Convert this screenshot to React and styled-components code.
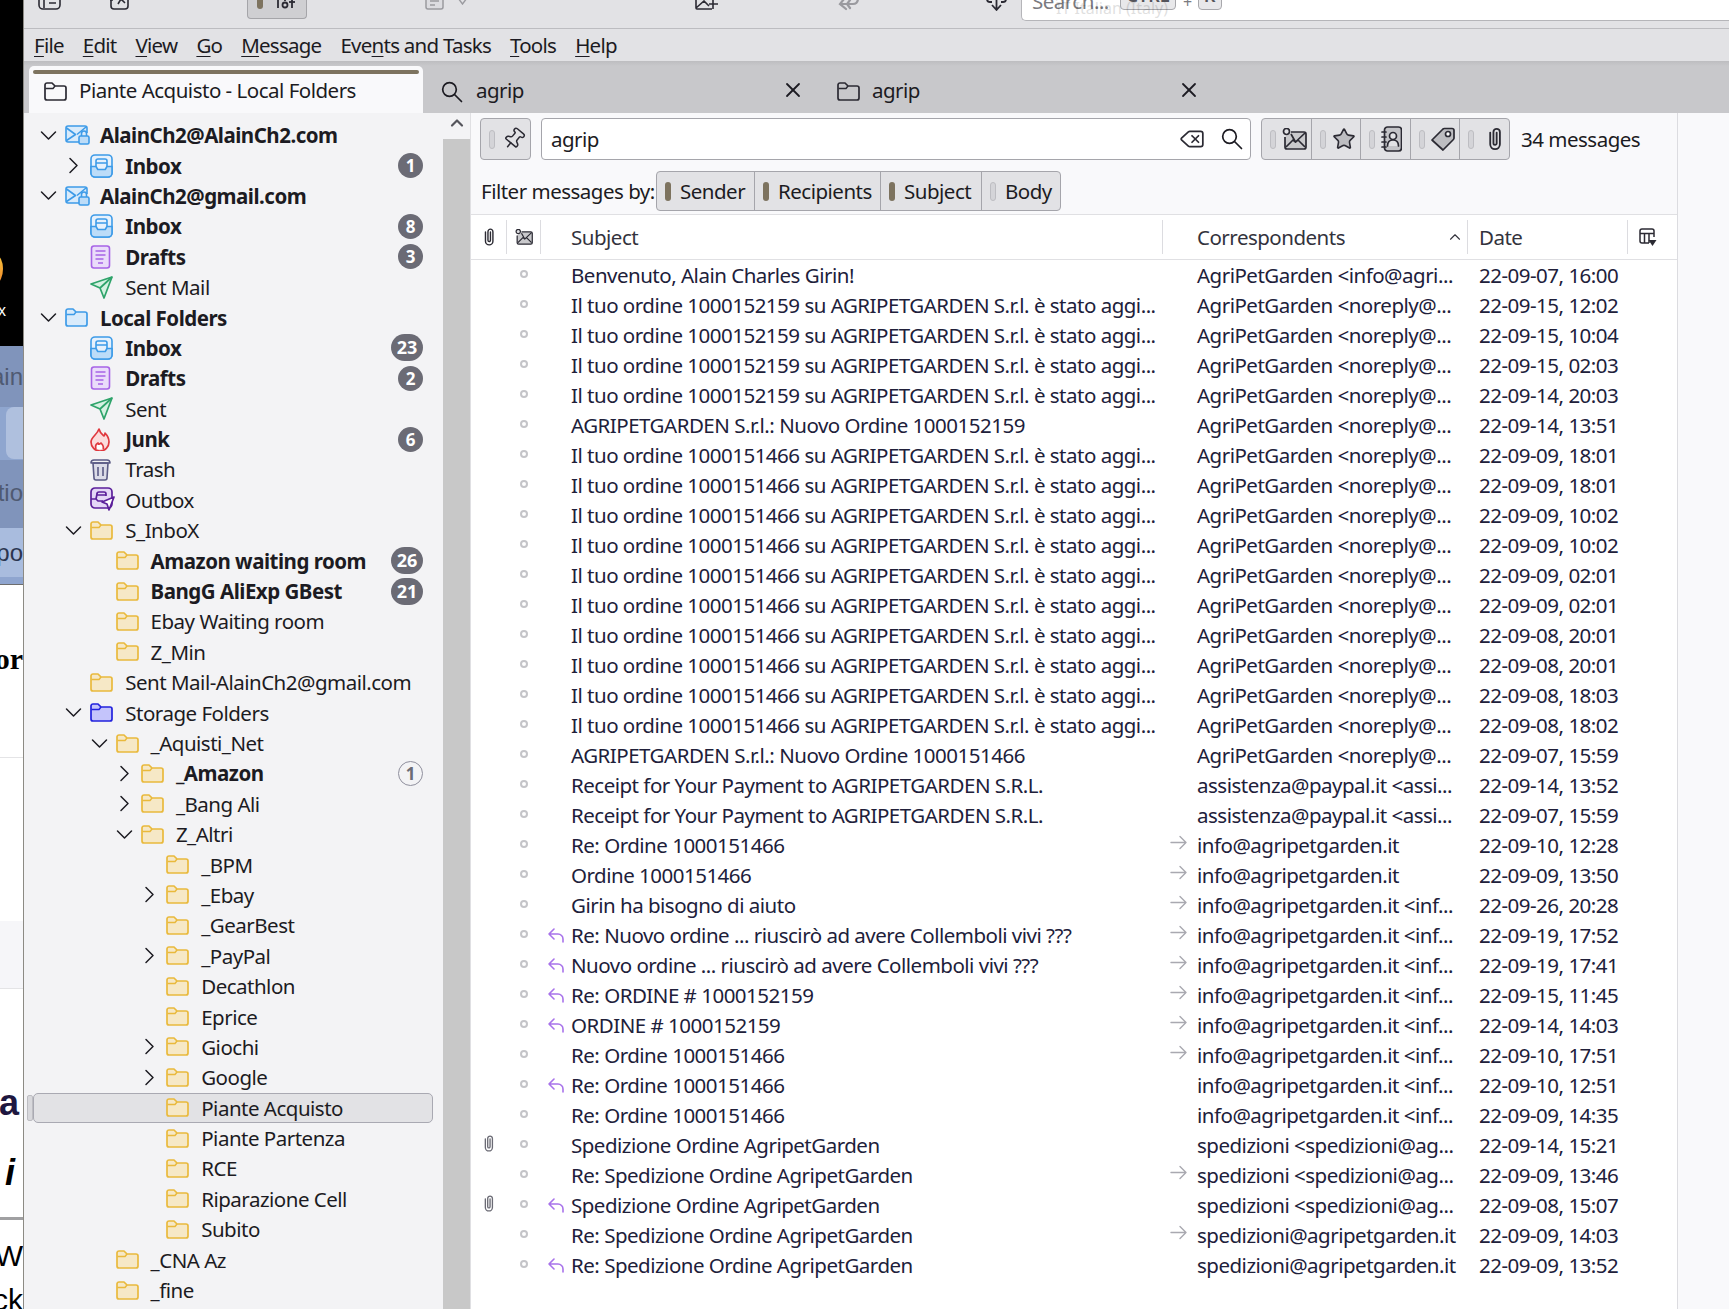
import React from "react";
import styled, { createGlobalStyle } from "styled-components";
import { X, Pin, Star, Delete, ChevronUp } from "lucide-react";

const Global = createGlobalStyle`
  html, body { margin: 0; padding: 0; background: #fff; overflow: hidden; }
  body { font-family: "Noto Sans", "Open Sans", sans-serif; }
`;

const tuo = (n) => `Il tuo ordine ${n} su AGRIPETGARDEN S.r.l. è stato aggi...`;
const apg = "AgriPetGarden <noreply@...";
const pay = "assistenza@paypal.it <assi...";
const inf = "info@agripetgarden.it <inf...";
const spe = "spedizioni <spedizioni@ag...";
const A = "1000152159";
const B = "1000151466";

const messages = [
  { s: "Benvenuto, Alain Charles Girin!", c: "AgriPetGarden <info@agri...", d: "22-09-07, 16:00" },
  { s: tuo(A), c: apg, d: "22-09-15, 12:02" },
  { s: tuo(A), c: apg, d: "22-09-15, 10:04" },
  { s: tuo(A), c: apg, d: "22-09-15, 02:03" },
  { s: tuo(A), c: apg, d: "22-09-14, 20:03" },
  { s: `AGRIPETGARDEN S.r.l.: Nuovo Ordine ${A}`, c: apg, d: "22-09-14, 13:51" },
  { s: tuo(B), c: apg, d: "22-09-09, 18:01" },
  { s: tuo(B), c: apg, d: "22-09-09, 18:01" },
  { s: tuo(B), c: apg, d: "22-09-09, 10:02" },
  { s: tuo(B), c: apg, d: "22-09-09, 10:02" },
  { s: tuo(B), c: apg, d: "22-09-09, 02:01" },
  { s: tuo(B), c: apg, d: "22-09-09, 02:01" },
  { s: tuo(B), c: apg, d: "22-09-08, 20:01" },
  { s: tuo(B), c: apg, d: "22-09-08, 20:01" },
  { s: tuo(B), c: apg, d: "22-09-08, 18:03" },
  { s: tuo(B), c: apg, d: "22-09-08, 18:02" },
  { s: `AGRIPETGARDEN S.r.l.: Nuovo Ordine ${B}`, c: apg, d: "22-09-07, 15:59" },
  { s: "Receipt for Your Payment to AGRIPETGARDEN S.R.L.", c: pay, d: "22-09-14, 13:52" },
  { s: "Receipt for Your Payment to AGRIPETGARDEN S.R.L.", c: pay, d: "22-09-07, 15:59" },
  { s: `Re: Ordine ${B}`, c: "info@agripetgarden.it", d: "22-09-10, 12:28", out: 1 },
  { s: `Ordine ${B}`, c: "info@agripetgarden.it", d: "22-09-09, 13:50", out: 1 },
  { s: "Girin ha bisogno di aiuto", c: inf, d: "22-09-26, 20:28", out: 1 },
  { s: "Re: Nuovo ordine ... riuscirò ad avere Collemboli vivi ???", c: inf, d: "22-09-19, 17:52", out: 1, re: 1 },
  { s: "Nuovo ordine ... riuscirò ad avere Collemboli vivi ???", c: inf, d: "22-09-19, 17:41", out: 1, re: 1 },
  { s: `Re: ORDINE # ${A}`, c: inf, d: "22-09-15, 11:45", out: 1, re: 1 },
  { s: `ORDINE # ${A}`, c: inf, d: "22-09-14, 14:03", out: 1, re: 1 },
  { s: `Re: Ordine ${B}`, c: inf, d: "22-09-10, 17:51", out: 1 },
  { s: `Re: Ordine ${B}`, c: inf, d: "22-09-10, 12:51", re: 1 },
  { s: `Re: Ordine ${B}`, c: inf, d: "22-09-09, 14:35" },
  { s: "Spedizione Ordine AgripetGarden", c: spe, d: "22-09-14, 15:21", clip: 1 },
  { s: "Re: Spedizione Ordine AgripetGarden", c: spe, d: "22-09-09, 13:46", out: 1 },
  { s: "Spedizione Ordine AgripetGarden", c: spe, d: "22-09-08, 15:07", clip: 1, re: 1 },
  { s: "Re: Spedizione Ordine AgripetGarden", c: "spedizioni@agripetgarden.it", d: "22-09-09, 14:03", out: 1 },
  { s: "Re: Spedizione Ordine AgripetGarden", c: "spedizioni@agripetgarden.it", d: "22-09-09, 13:52", re: 1 },
];

const folders = [
  { l: 0, t: "AlainCh2@AlainCh2.com", i: "account", o: 1, b: 1 },
  { l: 1, t: "Inbox", i: "inbox", o: 0, b: 1, n: 1 },
  { l: 0, t: "AlainCh2@gmail.com", i: "account", o: 1, b: 1 },
  { l: 1, t: "Inbox", i: "inbox", b: 1, n: 8 },
  { l: 1, t: "Drafts", i: "drafts", b: 1, n: 3 },
  { l: 1, t: "Sent Mail", i: "sent" },
  { l: 0, t: "Local Folders", i: "local", o: 1, b: 1 },
  { l: 1, t: "Inbox", i: "inbox", b: 1, n: 23 },
  { l: 1, t: "Drafts", i: "drafts", b: 1, n: 2 },
  { l: 1, t: "Sent", i: "sent" },
  { l: 1, t: "Junk", i: "junk", b: 1, n: 6 },
  { l: 1, t: "Trash", i: "trash" },
  { l: 1, t: "Outbox", i: "outbox" },
  { l: 1, t: "S_InboX", i: "folder", o: 1 },
  { l: 2, t: "Amazon waiting room", i: "folder", b: 1, n: 26 },
  { l: 2, t: "BangG AliExp GBest", i: "folder", b: 1, n: 21 },
  { l: 2, t: "Ebay Waiting room", i: "folder" },
  { l: 2, t: "Z_Min", i: "folder" },
  { l: 1, t: "Sent Mail-AlainCh2@gmail.com", i: "folder" },
  { l: 1, t: "Storage Folders", i: "storage", o: 1 },
  { l: 2, t: "_Aquisti_Net", i: "folder", o: 1 },
  { l: 3, t: "_Amazon", i: "folder", o: 0, b: 1, n: 1, hollow: 1 },
  { l: 3, t: "_Bang Ali", i: "folder", o: 0 },
  { l: 3, t: "Z_Altri", i: "folder", o: 1 },
  { l: 4, t: "_BPM", i: "folder" },
  { l: 4, t: "_Ebay", i: "folder", o: 0 },
  { l: 4, t: "_GearBest", i: "folder" },
  { l: 4, t: "_PayPal", i: "folder", o: 0 },
  { l: 4, t: "Decathlon", i: "folder" },
  { l: 4, t: "Eprice", i: "folder" },
  { l: 4, t: "Giochi", i: "folder", o: 0 },
  { l: 4, t: "Google", i: "folder", o: 0 },
  { l: 4, t: "Piante Acquisto", i: "folder", sel: 1 },
  { l: 4, t: "Piante Partenza", i: "folder" },
  { l: 4, t: "RCE", i: "folder" },
  { l: 4, t: "Riparazione Cell", i: "folder" },
  { l: 4, t: "Subito", i: "folder" },
  { l: 2, t: "_CNA Az", i: "folder" },
  { l: 2, t: "_fine", i: "folder" },
];

const FolderGlyph = ({ stroke = "#e9b93c", fill = "#f6e8c6", w = 23, h = 19 }) => (
  <svg width={w} height={h} viewBox="0 0 23 19" fill="none" strokeLinejoin="round">
    <path d="M1 3a2 2 0 0 1 2-2h5l3 3h9a2 2 0 0 1 2 2v10a2 2 0 0 1-2 2H3a2 2 0 0 1-2-2z" fill={fill} stroke={stroke} strokeWidth="1.7" />
    <path d="M1.5 6.5H9L11 4" stroke={stroke} strokeWidth="1.5" />
  </svg>
);

const InboxGlyph = () => (
  <svg width="23" height="24" viewBox="0 0 23 24" fill="none" stroke="#3d9be8" strokeWidth="1.6" strokeLinejoin="round">
    <rect x="1" y="1" width="21" height="22" rx="4" fill="#e6f1fc" />
    <path d="M6 12.500V7a2 2 0 0 1 2-2h7a2 2 0 0 1 2 2v5.500M6 9h11" />
    <path d="M1 12.500h5l1.800 3h7.400l1.800-3h5V19a4 4 0 0 1-4 4H5a4 4 0 0 1-4-4z" fill="#bcdcf8" />
  </svg>
);

const AccountGlyph = () => (
  <svg width="25" height="20" viewBox="0 0 25 20" fill="none" stroke="#3d9be8" strokeWidth="1.6" strokeLinejoin="round">
    <path d="M14 17H3a2 2 0 0 1-2-2V3a2 2 0 0 1 2-2h17a2 2 0 0 1 2 2v5" fill="#d9ebfb" />
    <path d="M1.5 3l9 6.5-9 6M21 2l-9 7.5" />
    <rect x="14" y="11" width="10" height="8" rx="1.5" fill="#bcdcf8" />
    <path d="M16.5 11V8.5a2.5 2.5 0 0 1 5 0V11" />
  </svg>
);

const DraftsGlyph = () => (
  <svg width="21" height="24" viewBox="0 0 21 24" fill="#eadcfa" stroke="#a763e6" strokeWidth="1.6">
    <rect x="1.5" y="1" width="18" height="22" rx="2.5" />
    <path d="M5.5 6h10M5.5 10h10M5.5 14h8M8 18h5" fill="none" />
  </svg>
);

const SentGlyph = ({ color = "#2ea36a", fill = "#d6f1e2" }) => (
  <svg width="23" height="23" viewBox="0 0 23 23" fill={fill} stroke={color} strokeWidth="1.7" strokeLinejoin="round">
    <path d="M22 1L1 8l9 4 4 10z" />
    <path d="M10 12L22 1" fill="none" />
  </svg>
);

const JunkGlyph = () => (
  <svg width="20" height="23" viewBox="0 0 20 23" fill="#fbdcdc" stroke="#e0383e" strokeWidth="1.7" strokeLinejoin="round">
    <path d="M9 1c1 4 3 5 5 7 1-1 1-2 1-3 3 3 4 6 4 9a9 9 0 0 1-18 0c0-5 6-7 8-13z" />
    <path d="M6 21c-1-3 0-5 2-6 0 2 2 1 3 0 2 2 3 4 2 6" fill="#fff" />
  </svg>
);

const TrashGlyph = () => (
  <svg width="21" height="23" viewBox="0 0 21 23" fill="#dcdce8" stroke="#5b5b85" strokeWidth="1.6" strokeLinejoin="round">
    <path d="M3 5l1 15a2 2 0 0 0 2 2h9a2 2 0 0 0 2-2l1-15z" />
    <path d="M1 5c0-2 1-3 3-3h13c2 0 3 1 3 3zM8 9v9M13 9v9" fill="none" />
  </svg>
);

const OutboxGlyph = () => (
  <svg width="25" height="25" viewBox="0 0 25 25" fill="#e4d6f6" stroke="#5b1f9a" strokeWidth="1.7" strokeLinejoin="round">
    <rect x="1" y="1" width="21" height="20" rx="4" />
    <path d="M1 12h5l2 2h5M6 12l1-5a2 2 0 0 1 2-2h5a2 2 0 0 1 2 2v2M6.5 8h9" fill="none" />
    <path d="M24 10l-12 5 5 2 2 6z" fill="#fff" />
  </svg>
);

const folderIcons = {
  account: <AccountGlyph />,
  inbox: <InboxGlyph />,
  drafts: <DraftsGlyph />,
  sent: <SentGlyph />,
  junk: <JunkGlyph />,
  trash: <TrashGlyph />,
  outbox: <OutboxGlyph />,
  local: <FolderGlyph stroke="#3d9be8" fill="#d9ebfb" />,
  storage: <FolderGlyph stroke="#2222dd" fill="#c4c4fb" />,
  folder: <FolderGlyph />,
};

const Chevron = ({ open }) => (
  <svg width="17" height="17" viewBox="0 0 17 17" fill="none" stroke="#1c1b22" strokeWidth="1.5" strokeLinecap="round" strokeLinejoin="round">
    {open ? <path d="M1.5 5l7 7 7-7" /> : <path d="M5 1.5l7 7-7 7" />}
  </svg>
);

const Magnifier = ({ size = 22 }) => (
  <svg width={size} height={size} viewBox="0 0 22 22" fill="none" stroke="#1c1b22" strokeWidth="1.7" strokeLinecap="round">
    <circle cx="8.500" cy="8.500" r="6.800" />
    <path d="M13.500 13.500L20.500 20.500" />
  </svg>
);

const Clip = ({ h = 24, color = "#2b2a33" }) => (
  <svg width={h * 0.62} height={h} viewBox="0 0 15 24" fill="none" stroke={color} strokeWidth="1.7" strokeLinecap="round">
    <path d="M3 6v11a4.5 4.5 0 0 0 9 0V5.5a3 3 0 0 0-6 0V16a1.4 1.4 0 0 0 3 0V6" />
  </svg>
);

const UnreadMail = ({ w = 25 }) => (
  <svg width={w} height={w * 0.88} viewBox="0 0 25 22" fill="none" stroke="#2b2a33" strokeWidth="1.7" strokeLinejoin="round">
    <path d="M9 4h13a2 2 0 0 1 2 2v13a2 2 0 0 1-2 2H5a2 2 0 0 1-2-2V9" fill="#c9c9cc" />
    <path d="M4 19l7-7 2.5 2 2.5-2 7 7M9 6l4.5 8L23 5" />
    <circle cx="4.5" cy="3.5" r="3" fill="#e2e2e5" />
  </svg>
);

const AddressBook = () => (
  <svg width="21" height="26" viewBox="0 0 21 26" fill="#c4c4c8" stroke="#2b2a33" strokeWidth="1.7" strokeLinecap="round">
    <rect x="3.500" y="1" width="17" height="24" rx="3" />
    <path d="M1 6h4M1 11h4M1 16h4M1 21h4" />
    <circle cx="12" cy="10" r="3.500" fill="#e2e2e5" />
    <path d="M6.500 20c0-4 2.500-6 5.500-6s5.500 2 5.500 6" fill="#e2e2e5" />
  </svg>
);

const TagGlyph = () => (
  <svg width="24" height="26" viewBox="0 0 24 26" fill="#bdbdc1" stroke="#2b2a33" strokeWidth="1.7" strokeLinejoin="round">
    <path d="M1 14L12 3a2 2 0 0 1 1.5-.5H21a2 2 0 0 1 2 2v7.500a2 2 0 0 1-.6 1.500L12 24z" />
    <circle cx="17" cy="8" r="2.500" fill="#fff" />
  </svg>
);

const ColumnPicker = () => (
  <svg width="18" height="19" viewBox="0 0 18 19" fill="none" stroke="#2b2a33" strokeWidth="1.500">
    <path d="M10 15H3a2 2 0 0 1-2-2V3a2 2 0 0 1 2-2h10a2 2 0 0 1 2 2v6M1 5.500h14M5.500 5.500V15M10 5.500V15" />
    <path d="M9.500 12h8l-4 6z" fill="#2b2a33" stroke="none" />
  </svg>
);

const ReplyGlyph = () => (
  <svg width="16" height="15" viewBox="0 0 16 15" fill="none" stroke="#a873ea" strokeWidth="1.600" strokeLinecap="round" strokeLinejoin="round">
    <path d="M6 1L1 6l5 5M1 6h9a5 5 0 0 1 5 5v3" />
  </svg>
);

const ArrowGlyph = () => (
  <svg width="17" height="15" viewBox="0 0 17 15" fill="none" stroke="#a9a9b0" strokeWidth="1.400" strokeLinecap="round" strokeLinejoin="round">
    <path d="M1 7.500h15M10 1.500l6 6-6 6" />
  </svg>
);

const Page = styled.div`
  display: grid;
  grid-template-columns: 23px 1fr;
  width: 1729px;
  height: 1309px;
  overflow: hidden;
`;

/* the desktop behind the window, only a sliver shows */
const Behind = styled.div`
  display: flex;
  flex-direction: column;
  width: 23px;
  height: 1309px;
  overflow: hidden;
  background: #fff;
`;
const Band = styled.div`
  flex: none;
  height: ${(p) => p.$h}px;
  background: ${(p) => p.$bg || "#fff"};
  border-bottom: ${(p) => (p.$line ? `${p.$lw || 1}px solid ${p.$line}` : "none")};
  box-sizing: border-box;
  padding-top: ${(p) => p.$pt || 0}px;
  display: flex;
  flex-direction: column;
  align-items: flex-end;
  overflow: hidden;
  white-space: nowrap;
  color: ${(p) => p.$color || "#000"};
  font-family: ${(p) => p.$font || '"Liberation Sans", sans-serif'};
  font-size: ${(p) => p.$size || 24}px;
  font-weight: ${(p) => p.$weight || 400};
  line-height: ${(p) => p.$lh || 30}px;
`;
const Flame = styled.div`
  flex: none;
  align-self: flex-start;
  width: 14px;
  height: 28px;
  margin: 255px 0 0 -11px;
  border-radius: 50%;
  background: linear-gradient(#f7c33a, #f28a2c);
`;
const DeskX = styled.div`
  align-self: flex-start;
  color: #fff;
  font-size: 16px;
  line-height: 20px;
  margin-top: 18px;
  margin-left: -2px;
`;
const DeskChip = styled.div`
  align-self: flex-end;
  width: 17px;
  height: 52px;
  border-radius: 8px 0 0 8px;
  background: #afc0de;
`;
const DeskLetter = styled.span`
  font-style: ${(p) => (p.$italic ? "italic" : "normal")};
  color: ${(p) => p.$color || "inherit"};
  margin-top: ${(p) => p.$mt || 0}px;
  margin-right: ${(p) => p.$mr || 0}px;
`;

const Window = styled.div`
  display: flex;
  flex-direction: column;
  min-width: 0;
  border-left: 1px solid #8c8a84;
  color: #1c1b22;
  font-size: 20.5px;
  letter-spacing: -0.5px;
`;

const Toolbar = styled.div`
  display: flex;
  flex: none;
  height: 28px;
  background: #e2e2e5;
  overflow: hidden;
`;
const ToolSlot = styled.div`
  flex: none;
  margin-left: ${(p) => p.$ml}px;
  margin-top: ${(p) => p.$mt}px;
  line-height: 0;
  color: ${(p) => p.$color || "#2b2a33"};
`;
const ActiveTool = styled.div`
  flex: none;
  display: flex;
  align-items: flex-end;
  gap: 12px;
  box-sizing: border-box;
  width: 60px;
  height: 19px;
  margin-left: ${(p) => p.$ml}px;
  padding: 0 0 9px 9px;
  background: #cfcfd2;
  border: 1px solid #a5a5a9;
  border-top: none;
  border-radius: 0 0 4px 4px;
`;
const OnPill = styled.span`
  flex: none;
  display: block;
  width: 6px;
  height: ${(p) => p.$h || 19}px;
  border-radius: 3px;
  background: ${(p) => (p.$off ? "#d4d4d8" : "#7d735f")};
  border: ${(p) => (p.$off ? "1px solid #bdbdc2" : "none")};
  box-sizing: border-box;
`;
const GlobalSearch = styled.div`
  position: relative;
  flex: 1;
  height: 21px;
  margin-left: 14px;
  box-sizing: border-box;
  background: #fff;
  border: 1px solid #b5b5b9;
  border-top: none;
  border-right: none;
  border-radius: 0 0 0 5px;
  display: flex;
  align-items: flex-end;
  padding-left: 10px;
  color: #7a7a80;
  overflow: hidden;
`;
const SearchHint = styled.span`
  flex: none;
  width: 88px;
  line-height: 28px;
  margin-bottom: 5px;
`;
const Kbd = styled.span`
  flex: none;
  display: block;
  box-sizing: border-box;
  width: ${(p) => p.$w}px;
  height: 22px;
  margin: 0 0 10px ${(p) => p.$ml}px;
  background: #e8e8ea;
  border: 1px solid #a8a8ac;
  border-radius: 4px;
  font-size: 18px;
  font-weight: 600;
  color: #55555c;
  text-align: center;
  line-height: 12px;
  letter-spacing: 0;
`;
const Plus = styled.span`
  margin: 0 0 8px 7px;
  line-height: 20px;
  font-size: 16px;
`;
const TooltipGhost = styled.span`
  position: absolute;
  left: 34px;
  bottom: 4px;
  font-size: 16px;
  line-height: 16px;
  letter-spacing: 0;
  color: #000;
  opacity: 0.12;
`;

const MenuBar = styled.div`
  display: flex;
  flex: none;
  align-items: center;
  gap: 19px;
  height: 33px;
  box-sizing: border-box;
  padding: 0 0 1px 10px;
  background: #e2e2e5;
  border-top: 1px solid #bcbcc0;
  letter-spacing: -0.75px;
`;
const MenuItem = styled.span`
  line-height: 26px;
  u { text-underline-offset: 3px; text-decoration-thickness: 1px; }
`;

const TabStrip = styled.div`
  display: flex;
  flex: none;
  align-items: flex-end;
  gap: 4px;
  height: 52px;
  padding-left: 5px;
  background: linear-gradient(#bdbdc0, #c8c8cb 5px);
`;
const Tab = styled.div`
  display: flex;
  flex: none;
  align-items: center;
  box-sizing: border-box;
  width: ${(p) => (p.$active ? 394 : 392)}px;
  height: 47px;
  padding: ${(p) => (p.$active ? "1px 14px 0 15px" : "1px 14px 0 14px")};
  border-radius: 5px 5px 0 0;
  background: ${(p) => (p.$active ? "#f9f9fb" : "transparent")};
  position: relative;
`;
const TabLine = styled.div`
  position: absolute;
  left: 4px;
  right: 4px;
  top: 4px;
  height: 4px;
  border-radius: 2px;
  background: #7d735f;
`;
const TabIcon = styled.span`
  flex: none;
  width: 35px;
  line-height: 0;
  margin-top: 3px;
`;
const TabTitle = styled.span`
  flex: 1;
  white-space: nowrap;
`;

const Body = styled.div`
  display: flex;
  flex: 1;
  min-height: 0;
`;

const Tree = styled.div`
  flex: none;
  width: 419px;
  box-sizing: border-box;
  padding-top: 7px;
  background: #f3f3f5;
  overflow: hidden;
`;
const FolderRow = styled.div`
  position: relative;
  display: flex;
  align-items: center;
  box-sizing: border-box;
  height: 30.4px;
  padding: 0 20px 0 ${(p) => 16 + p.$level * 25.3}px;
  font-weight: ${(p) => (p.$bold ? 700 : 400)};
  &::before {
    content: ${(p) => (p.$sel ? '""' : "none")};
    position: absolute;
    left: 9px;
    right: 10px;
    top: 0;
    bottom: 0;
    background: #e2e2e5;
    border: 1px solid #a9a9b2;
    border-radius: 5px;
  }
  &::after {
    content: ${(p) => (p.$sel ? '""' : "none")};
    position: absolute;
    left: 3px;
    top: 2px;
    bottom: 2px;
    width: 4px;
    background: #d8d8dc;
    border: 1px solid #bdbdc2;
    border-radius: 2px;
  }
`;
const ChevSlot = styled.span`
  position: relative;
  flex: none;
  width: 25px;
  line-height: 0;
`;
const IconSlot = styled.span`
  position: relative;
  flex: none;
  width: 35px;
  line-height: 0;
`;
const FolderName = styled.span`
  position: relative;
  flex: 1;
  white-space: nowrap;
`;
const Badge = styled.span`
  flex: none;
  box-sizing: border-box;
  width: ${(p) => (p.$wide ? 32 : 25)}px;
  height: ${(p) => (p.$wide ? 27 : 25)}px;
  border-radius: 14px;
  background: ${(p) => (p.$hollow ? "transparent" : "#6b6b75")};
  border: ${(p) => (p.$hollow ? "1px solid #8f8f9d" : "none")};
  color: ${(p) => (p.$hollow ? "#6b6b75" : "#fff")};
  font-size: ${(p) => (p.$wide ? 18 : 17)}px;
  font-weight: 700;
  letter-spacing: 0;
  line-height: ${(p) => (p.$hollow ? 23 : p.$wide ? 27 : 25)}px;
  text-align: center;
`;

const Scrollbar = styled.div`
  flex: none;
  width: 27px;
  background: #c8c8c8;
`;
const ScrollUp = styled.div`
  height: 26px;
  background: #f3f3f5;
  display: flex;
  justify-content: center;
  color: #55555c;
`;

const Main = styled.div`
  flex: none;
  width: 1208px;
  box-sizing: border-box;
  display: flex;
  flex-direction: column;
  background: #fff;
  border-left: 1px solid #e0e0e3;
  border-right: 1px solid #dcdce0;
`;
const FilterPane = styled.div`
  flex: none;
  height: 102px;
  box-sizing: border-box;
  padding: 5px 0 0 9px;
  background: #f9f9fb;
  border-bottom: 1px solid #e0e0e3;
`;
const FilterRow = styled.div`
  display: flex;
  align-items: center;
  height: 42px;
`;
const PinButton = styled.div`
  flex: none;
  display: flex;
  align-items: center;
  gap: 7px;
  box-sizing: border-box;
  width: 51px;
  height: 42px;
  padding-left: 8px;
  background: #e2e2e5;
  border: 1px solid #a5a5ab;
  border-radius: 4px;
`;
const QuickInput = styled.div`
  flex: none;
  display: flex;
  align-items: center;
  gap: 16px;
  box-sizing: border-box;
  width: 710px;
  height: 42px;
  margin-left: 10px;
  padding: 0 7px 0 9px;
  background: #fff;
  border: 1px solid #a5a5ab;
  border-radius: 4px;
`;
const QuickText = styled.span`
  flex: 1;
`;
const ToggleGroup = styled.div`
  flex: none;
  display: flex;
  box-sizing: border-box;
  width: 249px;
  height: 42px;
  margin-left: 10px;
  background: #e2e2e5;
  border: 1px solid #a5a5ab;
  border-radius: 4px;
`;
const ToggleCell = styled.div`
  flex: 1;
  display: flex;
  align-items: center;
  gap: ${(p) => (p.$last ? 13 : 6)}px;
  padding-left: 8px;
  border-left: ${(p) => (p.$first ? "none" : "1px solid #a5a5ab")};
`;
const MsgCount = styled.span`
  margin-left: 11px;
  white-space: nowrap;
`;
const CriteriaRow = styled.div`
  display: flex;
  align-items: center;
  height: 40px;
  margin-top: 11px;
`;
const CriteriaLabel = styled.span`
  flex: none;
  width: 175px;
  padding-left: 1px;
  white-space: nowrap;
`;
const CriteriaGroup = styled.div`
  display: flex;
  height: 40px;
  box-sizing: border-box;
  background: #e2e2e5;
  border: 1px solid #a5a5ab;
  border-radius: 4px;
`;
const CriteriaButton = styled.div`
  display: flex;
  align-items: center;
  gap: 9px;
  box-sizing: border-box;
  width: ${(p) => p.$w}px;
  padding-left: 8px;
  border-left: ${(p) => (p.$first ? "none" : "1px solid #a5a5ab")};
  white-space: nowrap;
`;

const cols = "36px 34px 30px 592px 34px 282px 149px 1fr";

const HeadRow = styled.div`
  flex: none;
  display: grid;
  grid-template-columns: ${cols};
  height: 45px;
  box-sizing: border-box;
  border-bottom: 1px solid #e0e0e3;
  color: #33333d;
`;
const HeadCell = styled.div`
  display: flex;
  align-items: center;
  justify-content: ${(p) => (p.$center ? "center" : "space-between")};
  padding-right: ${(p) => p.$pr || 0}px;
  position: relative;
  white-space: nowrap;
  &::after {
    content: ${(p) => (p.$div ? '""' : "none")};
    position: absolute;
    right: ${(p) => p.$right || 0}px;
    top: 5px;
    bottom: 5px;
    width: 1px;
    background: #dcdce0;
  }
`;
const SortCaret = styled.span`
  line-height: 0;
  margin-right: 3px;
`;

const MsgList = styled.div`
  flex: 1;
  overflow: hidden;
`;
const MsgRow = styled.div`
  display: grid;
  grid-template-columns: ${cols};
  height: 30px;
  line-height: 30px;
  color: #20203a;
`;
const MsgCell = styled.div`
  display: flex;
  align-items: center;
  justify-content: ${(p) => (p.$center ? "center" : "flex-start")};
  white-space: nowrap;
`;
const ArrowCell = styled(MsgCell)`
  justify-content: flex-start;
  padding: 0 0 6px 7px;
  box-sizing: border-box;
`;
const ReadDot = styled.span`
  display: block;
  box-sizing: border-box;
  width: 8px;
  height: 8px;
  margin-bottom: 3px;
  border-radius: 50%;
  background: #fff;
  border: 2px solid #c4c4c8;
`;
const ClipGlyphSlot = styled.span`
  line-height: 0;
  margin-bottom: 3px;
`;

const Gutter = styled.div`
  flex: 1;
  background: #f9f9fb;
`;

const menu = [
  ["F", "ile"],
  ["E", "dit"],
  ["V", "iew"],
  ["G", "o"],
  ["M", "essage"],
  ["", "Eve", "n", "ts and Tasks"],
  ["T", "ools"],
  ["H", "elp"],
];

const toggleIcons = [
  <UnreadMail />,
  <Star size={24} strokeWidth={1.6} fill="#bdbdc1" color="#2b2a33" />,
  <AddressBook />,
  <TagGlyph />,
  <Clip h={26} />,
];

const criteria = [
  { t: "Sender", w: 97 },
  { t: "Recipients", w: 126 },
  { t: "Subject", w: 101 },
  { t: "Body", w: 79, off: 1 },
];

const App = () => (
  <>
    <Global />
    <Page>
      <Behind>
        <Band $h={346} $bg="#000">
          <Flame />
          <DeskX>x</DeskX>
        </Band>
        <Band $h={61} $bg="#8094bb" $color="#4f5a72" $pt={16}>ain</Band>
        <Band $h={53} $bg="#8fa6cf">
          <DeskChip />
        </Band>
        <Band $h={68} $bg="#8094bb" $color="#4f5a72" $pt={18}>tio</Band>
        <Band $h={49} $bg="#a9bcde" $color="#2b3550" $pt={10}>po</Band>
        <Band $h={8} $bg="#8fa5cf" $line="#6d6d6d" />
        <Band $h={173} $line="#e4e4e6" $pt={59} $font='"Liberation Serif", serif' $size={30} $weight={700}>or</Band>
        <Band $h={163} />
        <Band $h={68} $bg="#f6f6f9" $line="#e4e4e6" />
        <Band $h={228} $pt={96} $size={36} $weight={700} $color="#1e1740" $lh={36}>
          <DeskLetter $mr={4}>a</DeskLetter>
          <DeskLetter $italic $color="#000" $mt={34} $mr={8}>i</DeskLetter>
        </Band>
        <Band $h={3} $bg="#a0a0a2" />
        <Band $h={90} $pt={14} $size={30} $lh={44}>
          <DeskLetter>W</DeskLetter>
          <DeskLetter>ck</DeskLetter>
        </Band>
      </Behind>

      <Window>
        <Toolbar>
          <ToolSlot $ml={14} $mt={-14}>
            <svg width="23" height="24" viewBox="0 0 23 24" fill="none" stroke="currentColor" strokeWidth="1.6">
              <rect x="1" y="1" width="21" height="22" rx="4" />
              <path d="M6 13v9M11 17h7" />
            </svg>
          </ToolSlot>
          <ToolSlot $ml={48} $mt={-14}>
            <svg width="20" height="24" viewBox="0 0 20 24" fill="none" stroke="currentColor" strokeWidth="1.6">
              <rect x="2" y="2" width="17" height="21" rx="3" />
              <path d="M1 14h3M9 18l3-5 4 4" />
            </svg>
          </ToolSlot>
          <ActiveTool $ml={118}>
            <OnPill $h={14} />
            <svg width="20" height="10" viewBox="0 0 20 10" fill="none" stroke="#2b2a33" strokeWidth="1.8">
              <path d="M3 0v9M10 0v2M17 0v9" />
              <circle cx="10" cy="6" r="2.500" />
              <path d="M14 3h6" />
            </svg>
          </ActiveTool>
          <ToolSlot $ml={118} $mt={-14} $color="#9a9a9f">
            <svg width="19" height="24" viewBox="0 0 19 24" fill="#dcdce0" stroke="currentColor" strokeWidth="1.5">
              <rect x="1" y="1" width="17" height="22" rx="2" />
              <path d="M5 15h9M5 19h5" fill="none" />
            </svg>
          </ToolSlot>
          <ToolSlot $ml={14} $mt={-4} $color="#9a9a9f">
            <svg width="9" height="9" viewBox="0 0 9 9" fill="none" stroke="currentColor" strokeWidth="1.4">
              <path d="M0 2l4.500 6L9 2" />
            </svg>
          </ToolSlot>
          <ToolSlot $ml={228} $mt={-12}>
            <svg width="23" height="22" viewBox="0 0 23 22" fill="none" stroke="currentColor" strokeWidth="1.6">
              <path d="M17 21H2a1 1 0 0 1-1-1V5a1 1 0 0 1 1-1h15M1 20l8-7 5 5" />
              <path d="M18 11v10M14 16h9" />
            </svg>
          </ToolSlot>
          <ToolSlot $ml={120} $mt={-13} $color="#9a9a9f">
            <svg width="25" height="24" viewBox="0 0 25 24" fill="none" stroke="currentColor" strokeWidth="2.2" strokeLinecap="round">
              <path d="M6 12l-4 5 6 5M3 17h12c4 0 5-3 5-6M12 13l-3 4 3 4" />
            </svg>
          </ToolSlot>
          <ToolSlot $ml={123} $mt={-12}>
            <svg width="21" height="23" viewBox="0 0 21 23" fill="none" stroke="currentColor" strokeWidth="1.8" strokeLinejoin="round">
              <path d="M1 11a3 3 0 0 1 3-3h13a3 3 0 0 1 3 3 3 3 0 0 1-3 3h-2M6 14H4a3 3 0 0 1-3-3M10.500 10v12M6 17l4.500 5 4.500-5" />
            </svg>
          </ToolSlot>
          <GlobalSearch>
            <SearchHint>Search...</SearchHint>
            <Kbd $w={56} $ml={0}>CTRL</Kbd>
            <Plus>+</Plus>
            <Kbd $w={24} $ml={6}>K</Kbd>
            <TooltipGhost>IT Italian (Italy)</TooltipGhost>
          </GlobalSearch>
        </Toolbar>

        <MenuBar>
          {menu.map((m) => (
            <MenuItem key={m.join("")}>
              {m[0] ? <u>{m[0]}</u> : null}
              {m[1]}
              {m[2] ? <u>{m[2]}</u> : null}
              {m[3]}
            </MenuItem>
          ))}
        </MenuBar>

        <TabStrip>
          <Tab $active>
            <TabLine />
            <TabIcon>
              <FolderGlyph stroke="#2b2a33" fill="transparent" />
            </TabIcon>
            <TabTitle>Piante Acquisto - Local Folders</TabTitle>
          </Tab>
          <Tab>
            <TabIcon>
              <Magnifier />
            </TabIcon>
            <TabTitle>agrip</TabTitle>
            <X size={24} strokeWidth={1.8} color="#1c1b22" />
          </Tab>
          <Tab>
            <TabIcon>
              <FolderGlyph stroke="#2b2a33" fill="transparent" />
            </TabIcon>
            <TabTitle>agrip</TabTitle>
            <X size={24} strokeWidth={1.8} color="#1c1b22" />
          </Tab>
        </TabStrip>

        <Body>
          <Tree>
            {folders.map((f) => (
              <FolderRow key={f.t + f.l + f.i + (f.n || "")} $level={f.l} $bold={f.b} $sel={f.sel}>
                <ChevSlot>{f.o !== undefined ? <Chevron open={!!f.o} /> : null}</ChevSlot>
                <IconSlot>{folderIcons[f.i]}</IconSlot>
                <FolderName>{f.t}</FolderName>
                {f.n ? <Badge $hollow={f.hollow} $wide={f.n > 9}>{f.n}</Badge> : null}
              </FolderRow>
            ))}
          </Tree>
          <Scrollbar>
            <ScrollUp>
              <ChevronUp size={20} strokeWidth={2.6} />
            </ScrollUp>
          </Scrollbar>
          <Main>
            <FilterPane>
              <FilterRow>
                <PinButton>
                  <OnPill $off />
                  <Pin size={24} strokeWidth={1.5} color="#2b2a33" style={{ transform: "rotate(40deg)" }} />
                </PinButton>
                <QuickInput>
                  <QuickText>agrip</QuickText>
                  <Delete size={26} strokeWidth={1.6} color="#2b2a33" />
                  <Magnifier />
                </QuickInput>
                <ToggleGroup>
                  {toggleIcons.map((ic, i) => (
                    <ToggleCell key={i} $first={i === 0} $last={i === 4}>
                      <OnPill $off />
                      {ic}
                    </ToggleCell>
                  ))}
                </ToggleGroup>
                <MsgCount>34 messages</MsgCount>
              </FilterRow>
              <CriteriaRow>
                <CriteriaLabel>Filter messages by:</CriteriaLabel>
                <CriteriaGroup>
                  {criteria.map((c, i) => (
                    <CriteriaButton key={c.t} $w={c.w} $first={i === 0}>
                      <OnPill $off={c.off} />
                      {c.t}
                    </CriteriaButton>
                  ))}
                </CriteriaGroup>
              </CriteriaRow>
            </FilterPane>

            <HeadRow>
              <HeadCell $center $div>
                <Clip h={20} />
              </HeadCell>
              <HeadCell $center $div>
                <UnreadMail w={18} />
              </HeadCell>
              <HeadCell />
              <HeadCell $div>Subject</HeadCell>
              <HeadCell />
              <HeadCell $div $right={11}>
                Correspondents
                <SortCaret>
                  <ChevronUp size={18} strokeWidth={1.5} style={{ marginRight: 12 }} />
                </SortCaret>
              </HeadCell>
              <HeadCell $div>Date</HeadCell>
              <HeadCell $center $pr={10}>
                <ColumnPicker />
              </HeadCell>
            </HeadRow>

            <MsgList>
              {messages.map((m, i) => (
                <MsgRow key={i}>
                  <MsgCell $center>
                    {m.clip ? (
                      <ClipGlyphSlot>
                        <Clip h={19} color="#6b6b75" />
                      </ClipGlyphSlot>
                    ) : null}
                  </MsgCell>
                  <MsgCell $center>
                    <ReadDot />
                  </MsgCell>
                  <MsgCell $center>{m.re ? <ReplyGlyph /> : null}</MsgCell>
                  <MsgCell>{m.s}</MsgCell>
                  <ArrowCell>{m.out ? <ArrowGlyph /> : null}</ArrowCell>
                  <MsgCell>{m.c}</MsgCell>
                  <MsgCell>{m.d}</MsgCell>
                  <MsgCell />
                </MsgRow>
              ))}
            </MsgList>
          </Main>
          <Gutter />
        </Body>
      </Window>
    </Page>
  </>
);

export default App;
